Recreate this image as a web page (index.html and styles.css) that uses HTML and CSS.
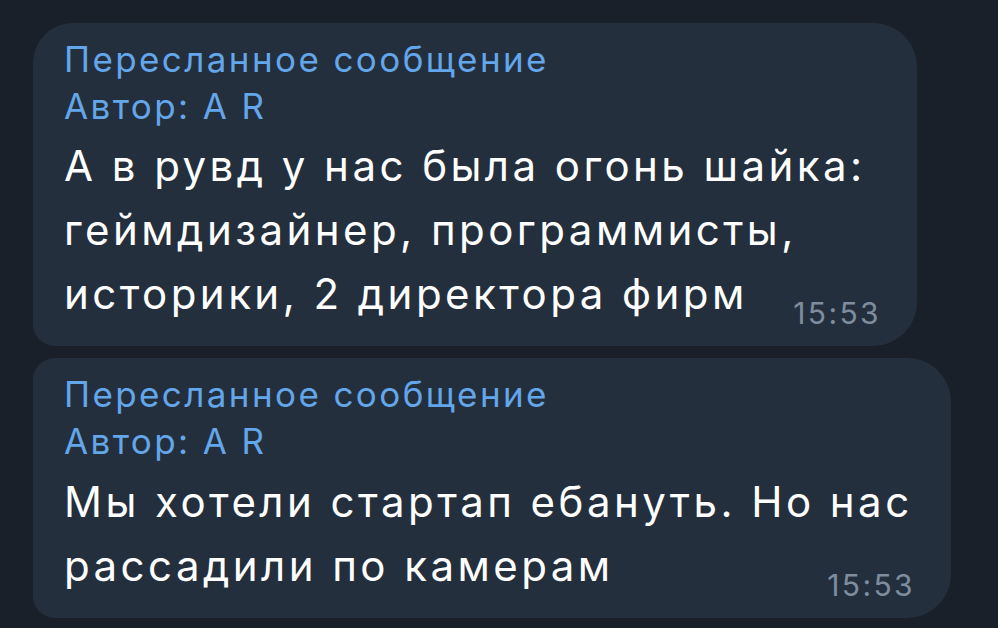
FILE: index.html
```html
<!DOCTYPE html>
<html lang="ru">
<head>
    <meta charset="UTF-8">
    <meta name="viewport" content="width=device-width, initial-scale=1.0">
    <title>Чат</title>
    <link rel="stylesheet" href="styles.css">
</head>
<body>
    <div class="chat">
        <div class="bubble first">
            <div class="forward">
                <div>Пересланное сообщение</div>
                <div>Автор: A R</div>
            </div>
            <div class="text">
                <div>А в рувд у нас была огонь шайка:</div>
                <div>геймдизайнер, программисты,</div>
                <div class="last-line">
                    <span>историки, 2 директора фирм</span>
                    <span class="time">15:53</span>
                </div>
            </div>
        </div>
        <div class="bubble second">
            <div class="forward">
                <div>Пересланное сообщение</div>
                <div>Автор: A R</div>
            </div>
            <div class="text">
                <div>Мы хотели стартап ебануть. Но нас</div>
                <div class="last-line">
                    <span>рассадили по камерам</span>
                    <span class="time">15:53</span>
                </div>
            </div>
        </div>
    </div>
</body>
</html>
```

FILE: styles.css
```css
body {
    margin: 0;
    height: 628px;
    overflow: hidden;
    background-color: #1a2029;
    font-family: Inter, "Noto Sans", sans-serif;
}

.chat {
    display: flex;
    flex-direction: column;
    align-items: flex-start;
    gap: 12px;
    padding: 23px 0 0 33px;
}

.bubble {
    box-sizing: border-box;
    background-color: #242f3d;
    padding: 13px 38px 20px 31px;
}

.bubble.first {
    width: 884px;
    border-radius: 40px 44px 44px 22px;
}

.bubble.second {
    width: 918px;
    border-radius: 22px 44px 44px 22px;
}

.forward {
    color: #63a6ea;
    font-size: 35px;
    line-height: 47px;
    letter-spacing: 2.4px;
    white-space: nowrap;
}

.text {
    margin-top: 4px;
    color: #ffffff;
    font-size: 42px;
    line-height: 64px;
    letter-spacing: 3.45px;
    white-space: nowrap;
}

.second .text {
    margin-top: 5px;
}

.last-line {
    display: flex;
    justify-content: space-between;
}

.time {
    align-self: flex-end;
    color: #7e8d9d;
    font-size: 30px;
    line-height: 26px;
    letter-spacing: 2.4px;
    margin-right: -2px;
}
```
